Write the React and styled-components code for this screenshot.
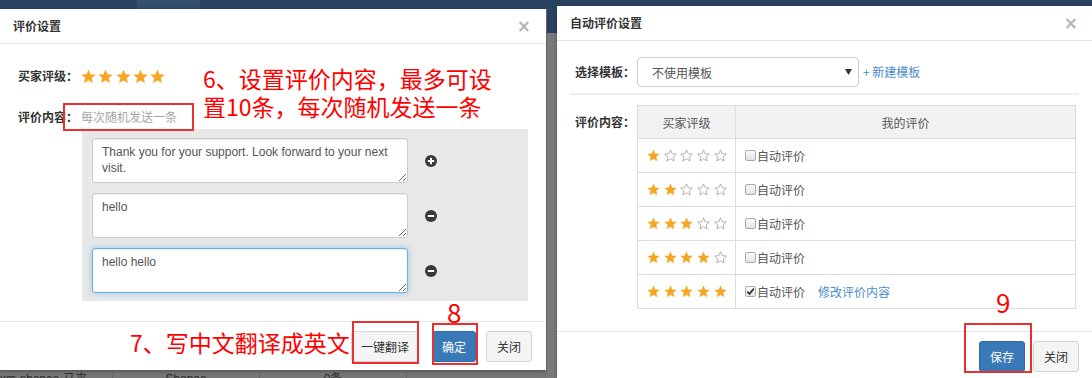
import React from "react";
import styled, { createGlobalStyle } from "styled-components";

const GlobalStyle = createGlobalStyle`
  html, body { margin: 0; padding: 0; }
  body {
    width: 1092px; height: 378px; overflow: hidden; background: #767676;
    font-family: "Liberation Sans", "Noto Sans CJK SC", sans-serif;
    font-size: 12px; color: #333;
  }
`;

const FONT = `"Liberation Sans", "Noto Sans CJK SC", sans-serif`;
const CJK = `"Noto Sans CJK SC", "Liberation Sans", sans-serif`;

const Page = styled.div`
  position: relative;
  display: flex;
  width: 1092px;
  height: 378px;
  overflow: hidden;
`;

/* ---------- left screenshot ---------- */
const LeftScreen = styled.div`
  flex: none;
  width: 547px;
  display: flex;
  flex-direction: column;
  background: #767676;
`;

const TopBar = styled.div`
  flex: none;
  height: ${(p) => p.$h}px;
  background: #2a4261;
  display: flex;
`;

const NavHighlight = styled.div`
  margin-left: 137px;
  width: 63px;
  background: #34506f;
`;

const Dialog = styled.div`
  flex: ${(p) => (p.$grow ? "1" : "none")};
  width: ${(p) => p.$w}px;
  height: ${(p) => (p.$h ? `${p.$h}px` : "auto")};
  margin-left: ${(p) => p.$ml || 0}px;
  margin-top: ${(p) => p.$mt || 0}px;
  background: #fff;
  box-shadow: 0 1px 4px rgba(0, 0, 0, 0.35);
  display: flex;
  flex-direction: column;
  box-sizing: border-box;
`;

const Header = styled.div`
  flex: none;
  height: 35px;
  box-sizing: border-box;
  border-bottom: 1px solid #e5e5e5;
  display: flex;
  align-items: center;
  justify-content: space-between;
  padding: 0 ${(p) => p.$pr}px 0 13px;
`;

const Title = styled.div`
  font-family: ${CJK};
  font-size: 12px;
  font-weight: 700;
  color: #333;
  line-height: 16px;
`;

const Close = styled.span`
  font-family: "DejaVu Sans", sans-serif;
  font-size: 17px;
  font-weight: 700;
  color: #b5b5b5;
  line-height: 16px;
`;

const LeftBody = styled.div`
  flex: 1;
  padding-top: 20px;
  display: flex;
  flex-direction: column;
`;

const FieldRow = styled.div`
  display: flex;
  align-items: center;
  height: 24px;
  margin-top: ${(p) => p.$mt || 0}px;
`;

const Label = styled.div`
  flex: none;
  width: ${(p) => p.$w}px;
  padding-left: 18px;
  box-sizing: border-box;
  font-family: ${CJK};
  font-size: 12px;
  font-weight: 700;
  color: #333;
  line-height: 16px;
`;

const Stars = styled.div`
  display: flex;
  gap: ${(p) => p.$gap}px;
  align-items: center;
`;

const Placeholder = styled.div`
  font-family: ${CJK};
  color: #a5a5a5;
  font-size: 12px;
  line-height: 16px;
`;

const GrayArea = styled.div`
  margin-left: 82px;
  width: 446px;
  background: #e8e8e8;
  padding: 9px 0 8px 10px;
  box-sizing: border-box;
  display: flex;
  flex-direction: column;
  gap: 10px;
`;

const TextRow = styled.div`
  display: flex;
  align-items: center;
`;

const Text = styled.textarea`
  width: 316px;
  height: 45px;
  box-sizing: border-box;
  padding: 5px 9px;
  margin: 0;
  font-family: ${FONT};
  font-size: 12px;
  line-height: 16px;
  color: #555;
  background: #fff;
  border: 1px solid ${(p) => (p.$focused ? "#66afe9" : "#ccc")};
  border-radius: 3px;
  box-shadow: ${(p) =>
    p.$focused
      ? "inset 0 1px 1px rgba(0,0,0,.075), 0 0 6px rgba(102,175,233,.6)"
      : "inset 0 1px 1px rgba(0,0,0,.075)"};
  outline: none;
`;

const IconWrap = styled.span`
  margin-left: 17px;
  display: flex;
`;

const Footer = styled.div`
  flex: none;
  height: ${(p) => p.$h}px;
  box-sizing: border-box;
  border-top: 1px solid #e5e5e5;
  padding: 9px ${(p) => p.$pr}px 0 0;
  display: flex;
  justify-content: flex-end;
  align-items: flex-start;
  gap: ${(p) => p.$gap}px;
`;

const Button = styled.button`
  height: ${(p) => p.$h || 31}px;
  padding: 0 ${(p) => p.$px || 10}px;
  margin: 0 ${(p) => p.$mr || 0}px 0 0;
  font-family: ${CJK};
  font-size: 12px;
  line-height: 16px;
  border-radius: 3px;
  border: 1px solid ${(p) => (p.$primary ? "#2e6da4" : "#d4d4d4")};
  background: ${(p) => (p.$primary ? "#3a79b7" : "#f4f4f4")};
  color: ${(p) => (p.$primary ? "#fff" : "#333")};
  cursor: pointer;
`;

const BackdropRow = styled.div`
  flex: 1;
  display: flex;
  overflow: hidden;
  padding-top: 2px;
`;

const BackCell = styled.div`
  flex: none;
  width: ${(p) => p.$w}px;
  text-align: ${(p) => p.$align || "center"};
  border-right: 1px solid #666;
  font-family: ${FONT};
  font-size: 12px;
  line-height: 14px;
  color: #2c2c2c;
  white-space: nowrap;
`;

/* ---------- right screenshot ---------- */
const RightScreen = styled.div`
  flex: none;
  width: 545px;
  display: flex;
  flex-direction: column;
  background: linear-gradient(to bottom, #2a4261 0, #2a4261 33px, #7a7a7a 33px);
`;

const RightBody = styled.div`
  flex: 1;
  padding-top: 19px;
  display: flex;
  flex-direction: column;
`;

const Select = styled.div`
  width: 222px;
  height: 30px;
  box-sizing: border-box;
  border: 1px solid #ccc;
  border-radius: 4px;
  padding: 0 6px 0 14px;
  display: flex;
  align-items: center;
  justify-content: space-between;
  font-family: ${CJK};
  font-size: 12px;
  color: #555;
`;

const Link = styled.a`
  margin-left: ${(p) => p.$ml}px;
  font-family: ${CJK};
  font-size: 12px;
  line-height: 16px;
  color: #4a8bcb;
  text-decoration: none;
`;

const Separator = styled.div`
  height: 2px;
  background: #eee;
  margin: 9px 13px 0 13px;
`;

const TableRow = styled.div`
  display: flex;
  align-items: flex-start;
  margin-top: 10px;
`;

const TableLabel = styled(Label)`
  height: 33px;
  display: flex;
  align-items: center;
`;

const Table = styled.table`
  width: 439px;
  border-collapse: collapse;
  table-layout: fixed;
  font-family: ${CJK};
  font-size: 12px;
  color: #555;
`;

const Th = styled.th`
  height: 33px;
  box-sizing: border-box;
  padding: 0;
  background: #f2f2f2;
  border: 1px solid #ddd;
  font-weight: 400;
  text-align: center;
  width: ${(p) => (p.$w ? `${p.$w}px` : "auto")};
`;

const Td = styled.td`
  height: 34px;
  box-sizing: border-box;
  padding: 0 0 0 ${(p) => p.$pl}px;
  border: 1px solid #ddd;
  vertical-align: middle;
`;

const CellInner = styled.div`
  display: flex;
  align-items: center;
`;

const Check = styled.span`
  width: 11px;
  height: 11px;
  box-sizing: border-box;
  border: 1px solid #a9a9a9;
  border-radius: 2px;
  background: linear-gradient(#fafafa, #e4e4e4);
  display: flex;
  align-items: center;
  justify-content: center;
`;

const CheckText = styled.span`
  margin-left: 1px;
  line-height: 16px;
  color: #555;
`;

/* ---------- annotations (overlay) ---------- */
const Note = styled.div`
  position: absolute;
  left: ${(p) => p.$x}px;
  top: ${(p) => p.$y}px;
  font-family: ${CJK};
  font-size: ${(p) => p.$size}px;
  line-height: ${(p) => p.$lh}px;
  color: #ff0000;
  white-space: nowrap;
`;

const RedBox = styled.div`
  position: absolute;
  left: ${(p) => p.$x}px;
  top: ${(p) => p.$y}px;
  width: ${(p) => p.$w}px;
  height: ${(p) => p.$h}px;
  box-sizing: border-box;
  border: 2px solid #ec3030;
`;

/* ---------- drawings ---------- */
const Star = ({ filled, size }) => (
  <svg width={size} height={size} viewBox="0 0 24 24">
    <polygon
      points="12,1.5 15.1,8.6 22.8,9.3 17,14.4 18.7,22 12,18 5.3,22 7,14.4 1.2,9.3 8.9,8.6"
      fill={filled ? "#f6a623" : "none"}
      stroke={filled ? "#f6a623" : "#9a9a9a"}
      strokeWidth={filled ? 0.5 : 1.4}
      strokeLinejoin="round"
    />
  </svg>
);

const CircleIcon = ({ plus }) => (
  <svg width="12" height="12" viewBox="0 0 12 12">
    <circle cx="6" cy="6" r="6" fill="#383838" />
    <rect x="2.8" y="5" width="6.4" height="2" fill="#fff" />
    {plus && <rect x="5" y="2.8" width="2" height="6.4" fill="#fff" />}
  </svg>
);

const Caret = () => (
  <svg width="7" height="6" viewBox="0 0 7 6">
    <polygon points="0,0 7,0 3.5,6" fill="#333" />
  </svg>
);

const Tick = () => (
  <svg width="9" height="9" viewBox="0 0 9 9">
    <path d="M1.3 4.6 L3.5 6.9 L7.8 1.6" stroke="#333" strokeWidth="1.7" fill="none" />
  </svg>
);

const StarRow = ({ count, size, gap }) => (
  <Stars $gap={gap}>
    {[0, 1, 2, 3, 4].map((i) => (
      <Star key={i} filled={i < count} size={size} />
    ))}
  </Stars>
);

const texts = [
  { v: "Thank you for your support. Look forward to your next visit.", plus: true },
  { v: "hello" },
  { v: "hello hello", focused: true },
];

export default function App() {
  return (
    <>
      <GlobalStyle />
      <Page>
        <LeftScreen>
          <TopBar $h={9}>
            <NavHighlight />
          </TopBar>
          <Dialog $w={546} $h={361}>
            <Header $pr={15}>
              <Title>评价设置</Title>
              <Close>×</Close>
            </Header>
            <LeftBody>
              <FieldRow>
                <Label $w={81}>买家评级：</Label>
                <StarRow count={5} size={15} gap={2.3} />
              </FieldRow>
              <FieldRow $mt={17}>
                <Label $w={81}>评价内容：</Label>
                <Placeholder>每次随机发送一条</Placeholder>
              </FieldRow>
              <GrayArea>
                {texts.map((t, i) => (
                  <TextRow key={i}>
                    <Text defaultValue={t.v} $focused={t.focused} spellCheck={false} />
                    <IconWrap>
                      <CircleIcon plus={t.plus} />
                    </IconWrap>
                  </TextRow>
                ))}
              </GrayArea>
            </LeftBody>
            <Footer $h={49} $pr={14} $gap={10}>
              <Button $px={9} $mr={3}>一键翻译</Button>
              <Button $primary $px={9}>确定</Button>
              <Button $px={10}>关闭</Button>
            </Footer>
          </Dialog>
          <BackdropRow>
            <BackCell $w={112} $align="left">xm-shopee-马来</BackCell>
            <BackCell $w={146}>Shopee</BackCell>
            <BackCell $w={146}>0条</BackCell>
            <BackCell $w={143}>-</BackCell>
          </BackdropRow>
        </LeftScreen>

        <RightScreen>
          <Dialog $w={535} $ml={10} $mt={6} $grow>
            <Header $pr={14}>
              <Title>自动评价设置</Title>
              <Close>×</Close>
            </Header>
            <RightBody>
              <FieldRow $h={30}>
                <Label $w={80}>选择模板：</Label>
                <Select>
                  <span>不使用模板</span>
                  <Caret />
                </Select>
                <Link $ml={4} href="#">+ 新建模板</Link>
              </FieldRow>
              <Separator />
              <TableRow>
                <TableLabel $w={80}>评价内容：</TableLabel>
                <Table>
                  <thead>
                    <tr>
                      <Th $w={98}>买家评级</Th>
                      <Th>我的评价</Th>
                    </tr>
                  </thead>
                  <tbody>
                    {[1, 2, 3, 4, 5].map((n) => (
                      <tr key={n}>
                        <Td $pl={9}>
                          <StarRow count={n} size={13} gap={3.7} />
                        </Td>
                        <Td $pl={9}>
                          <CellInner>
                            <Check>{n === 5 && <Tick />}</Check>
                            <CheckText>自动评价</CheckText>
                            {n === 5 && <Link $ml={13} href="#">修改评价内容</Link>}
                          </CellInner>
                        </Td>
                      </tr>
                    ))}
                  </tbody>
                </Table>
              </TableRow>
            </RightBody>
            <Footer $h={47} $pr={13} $gap={8}>
              <Button $primary $px={10}>保存</Button>
              <Button $px={10}>关闭</Button>
            </Footer>
          </Dialog>
        </RightScreen>

        <Note $x={203} $y={64} $size={23} $lh={28}>
          6、设置评价内容，最多可设
          <br />
          置10条，每次随机发送一条
        </Note>
        <RedBox $x={63} $y={103} $w={131} $h={28} />
        <Note $x={130} $y={327} $size={23} $lh={30}>7、写中文翻译成英文</Note>
        <RedBox $x={352} $y={321} $w={67} $h={43} />
        <Note $x={447} $y={297} $size={26} $lh={30}>8</Note>
        <RedBox $x={432} $y={323} $w={46} $h={42} />
        <Note $x={996} $y={287} $size={26} $lh={30}>9</Note>
        <RedBox $x={964} $y={323} $w={68} $h={50} />
      </Page>
    </>
  );
}
